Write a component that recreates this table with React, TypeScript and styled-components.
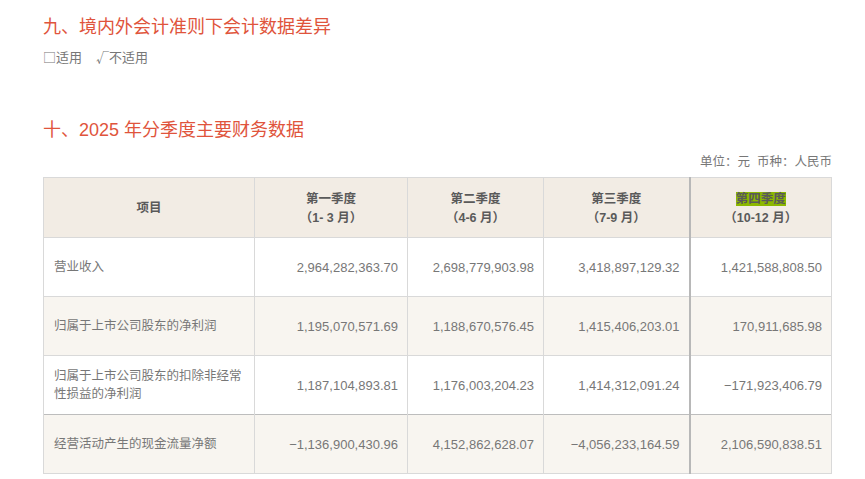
import React from 'react';
import styled, { createGlobalStyle } from 'styled-components';

const GlobalStyle = createGlobalStyle`
  body {
    margin: 0;
    background: #fff;
    font-family: 'Liberation Sans', 'Noto Sans CJK SC', sans-serif;
  }
`;

const Page = styled.div`
  padding: 15px 34px 0 43px;
  width: 788px;
`;

const SectionTitle = styled.h2<{ gap?: number }>`
  margin: 0;
  margin-top: ${props => props.gap || 0}px;
  font-size: 18px;
  line-height: 24px;
  font-weight: normal;
  color: #e0543c;
`;

const Applicability = styled.div`
  margin-top: 8px;
  font-family: 'Noto Sans CJK SC', sans-serif;
  font-size: 13px;
  line-height: 20px;
  color: #777;
  display: flex;
  gap: 14px;
`;

const Unit = styled.div`
  margin: 10px -1px 5px 0;
  font-size: 12.5px;
  line-height: 20px;
  color: #777;
  text-align: right;
`;

const Table = styled.table`
  border-collapse: collapse;
  width: 788px;
  table-layout: fixed;
  border-bottom: 1px solid #c6c6c6;
`;

const HeadCell = styled.th<{ strong?: boolean }>`
  height: 57px;
  background: #f2ece4;
  border: 1px solid #d9d9d9;
  border-left-color: ${props => (props.strong ? '#b8b8b8' : '#d9d9d9')};
  border-left-width: ${props => (props.strong ? 2 : 1)}px;
  font-size: 12.5px;
  line-height: 19px;
  font-weight: bold;
  color: #5a5a5a;
  text-align: center;
  padding: 2px 0 0;
`;

const Highlight = styled.span`
  background: #8cb800;
`;

const Row = styled.tr<{ shaded?: boolean; heavy?: boolean }>`
  background: ${props => (props.shaded ? '#f8f5f0' : '#fff')};
  border-bottom: 1px solid ${props => (props.heavy ? '#bdbdbd' : '#d9d9d9')};
`;

const LabelCell = styled.td`
  height: 58px;
  border-left: 1px solid #d9d9d9;
  border-right: 1px solid #d9d9d9;
  padding: 0 10px;
  font-size: 12.5px;
  line-height: 18px;
  color: #777;
`;

const NumCell = styled.td<{ strong?: boolean }>`
  border-left: ${props => (props.strong ? 2 : 1)}px solid ${props => (props.strong ? '#b8b8b8' : '#d9d9d9')};
  border-right: 1px solid #d9d9d9;
  padding: 0 9px 0 0;
  font-size: 13px;
  color: #777;
  text-align: right;
  white-space: nowrap;
`;

const quarters = [
  { name: '第一季度', range: '（1- 3 月）' },
  { name: '第二季度', range: '（4-6 月）' },
  { name: '第三季度', range: '（7-9 月）' },
  { name: '第四季度', range: '（10-12 月）' },
];

const rows = [
  { label: '营业收入', values: ['2,964,282,363.70', '2,698,779,903.98', '3,418,897,129.32', '1,421,588,808.50'] },
  { label: '归属于上市公司股东的净利润', values: ['1,195,070,571.69', '1,188,670,576.45', '1,415,406,203.01', '170,911,685.98'] },
  {
    label: '归属于上市公司股东的扣除非经常性损益的净利润',
    values: ['1,187,104,893.81', '1,176,003,204.23', '1,414,312,091.24', '−171,923,406.79'],
  },
  { label: '经营活动产生的现金流量净额', values: ['−1,136,900,430.96', '4,152,862,628.07', '−4,056,233,164.59', '2,106,590,838.51'] },
];

const App = () => (
  <Page>
    <GlobalStyle />
    <SectionTitle>九、境内外会计准则下会计数据差异</SectionTitle>
    <Applicability>
      <span>□适用</span>
      <span>√不适用</span>
    </Applicability>
    <SectionTitle gap={51}>十、2025 年分季度主要财务数据</SectionTitle>
    <Unit>单位：元&nbsp;&nbsp;币种：人民币</Unit>
    <Table>
      <colgroup>
        <col style={{ width: 211 }} />
        <col style={{ width: 153 }} />
        <col style={{ width: 136 }} />
        <col style={{ width: 146 }} />
        <col style={{ width: 142 }} />
      </colgroup>
      <thead>
        <tr>
          <HeadCell>项目</HeadCell>
          {quarters.map((q, i) => (
            <HeadCell key={q.name} strong={i === 3}>
              {i === 3 ? <Highlight>{q.name}</Highlight> : q.name}
              <br />
              {q.range}
            </HeadCell>
          ))}
        </tr>
      </thead>
      <tbody>
        {rows.map((r, i) => (
          <Row key={r.label} shaded={i % 2 === 1} heavy={i === 2}>
            <LabelCell>{r.label}</LabelCell>
            {r.values.map((v, j) => (
              <NumCell key={j} strong={j === 3}>
                {v}
              </NumCell>
            ))}
          </Row>
        ))}
      </tbody>
    </Table>
  </Page>
);

export default App;
